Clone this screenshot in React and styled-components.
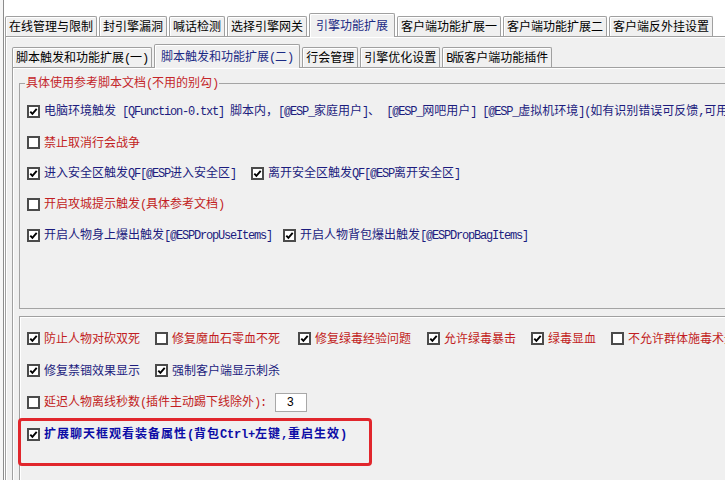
import React from "react";
import styled, { createGlobalStyle } from "styled-components";

const GlobalStyle = createGlobalStyle`
  html, body {
    margin: 0;
    padding: 0;
    background: #fff;
  }
  body {
    font-family: "Noto Sans CJK SC", "Liberation Sans", sans-serif;
    font-size: 12px;
  }
`;

const tones = {
  black: "#000",
  navy: "#1c1c7e",
  red: "#c21d22",
  blue: "#0c0ca6",
};

const Window = styled.div`
  display: flex;
  width: 725px;
  height: 480px;
  overflow: hidden;
  background: #fff;
`;

const Gutter = styled.div`
  flex: none;
  width: 3px;
  background: #f6f6f6;
  border-right: 1px solid #8c8c8c;
`;

const Main = styled.div`
  flex: none;
  width: 800px;
  padding: 13px 0 0 1px;
`;

const TabStrip = styled.div`
  position: relative;
  z-index: 1;
  display: flex;
  align-items: flex-end;
  gap: 2px;
  height: 23px;
`;

const Tab = styled.div`
  flex: none;
  box-sizing: border-box;
  height: ${(p) => (p.$active ? 24 : 20)}px;
  margin-bottom: ${(p) => (p.$active ? -1 : 0)}px;
  padding: 0 ${(p) => (p.$active ? 6 : 3)}px;
  border: 1px solid #a0a0a0;
  border-bottom: none;
  border-radius: 2px 2px 0 0;
  background: #f0f0f0;
  box-shadow: inset 1px 1px 0 #fff;
  color: ${(p) => (p.$active ? "#1b2a84" : "#000")};
  line-height: ${(p) => (p.$active ? 21 : 18)}px;
  white-space: nowrap;
`;

const Panel = styled.div`
  box-sizing: border-box;
  border-top: 1px solid #a0a0a0;
  border-left: 1px solid #a0a0a0;
  box-shadow: inset 1px 1px 0 #fff;
  background: #f0f0f0;
  padding: ${(p) => p.$pad};
  height: ${(p) => p.$h}px;
`;

const Group = styled.fieldset`
  box-sizing: border-box;
  margin: 0;
  padding: 0 0 0 7px;
  min-width: 0;
  height: 235px;
  border: 1px solid #a4a4a4;
`;

const Legend = styled.legend`
  margin-left: -2px;
  padding: 0 1px;
  line-height: 16px;
  color: #c4262a;
`;

const Rows = styled.div`
  display: flex;
  flex-direction: column;
  gap: ${(p) => p.$gap}px;
  padding-top: ${(p) => p.$top}px;
`;

const Row = styled.div`
  display: flex;
  align-items: center;
  height: ${(p) => p.$h || 16}px;
`;

const Asc = styled.span`
  font-family: "Liberation Mono", monospace;
  font-size: 12px;
  letter-spacing: -1.2px;
  white-space: pre;
`;

const CheckItem = styled.div`
  display: flex;
  align-items: center;
  flex: none;
  width: ${(p) => (p.$w ? `${p.$w}px` : "auto")};
  color: ${(p) => tones[p.$tone]};
  font-weight: ${(p) => (p.$bold ? 700 : 400)};
  letter-spacing: ${(p) => (p.$bold ? "1px" : "0")};
  white-space: nowrap;
  line-height: 16px;

  ${Asc} {
    letter-spacing: ${(p) => (p.$bold ? "-0.2px" : "-1.2px")};
  }
`;

const Box = styled.span`
  flex: none;
  display: flex;
  align-items: center;
  justify-content: center;
  box-sizing: border-box;
  width: 13px;
  height: 13px;
  margin-right: 4px;
  border: 2px solid #4b4b4b;
  background: #fff;
`;

const NumField = styled.input`
  box-sizing: border-box;
  width: 32px;
  height: 19px;
  margin-left: 9px;
  padding: 0 0 0 11px;
  border: 1px solid #a8a8a8;
  background: #fff;
  color: #000;
  font: 12px "Liberation Sans", sans-serif;
  outline: none;
`;

const Callout = styled.div`
  box-sizing: border-box;
  width: 354px;
  height: 48px;
  margin-left: -9px;
  padding: 5px 0 0 6px;
  border: 3px solid #e1262c;
  border-radius: 4px;
`;

function Txt({ children }) {
  return children
    .split(/([\x20-\x7e]+)/)
    .filter(Boolean)
    .map((s, i) => (/^[\x20-\x7e]+$/.test(s) ? <Asc key={i}>{s}</Asc> : s));
}

function Check({ on, label, tone = "navy", w, bold }) {
  return (
    <CheckItem $tone={tone} $w={w} $bold={bold}>
      <Box>
        {on && (
          <svg width="9" height="9" viewBox="0 0 9 9">
            <path d="M1.3 4.6 L3.4 6.9 L7.7 1.9" fill="none" stroke="#000" strokeWidth="1.9" />
          </svg>
        )}
      </Box>
      <span>
        <Txt>{label}</Txt>
      </span>
    </CheckItem>
  );
}

const topTabs = ["在线管理与限制", "封引擎漏洞", "喊话检测", "选择引擎网关", "引擎功能扩展", "客户端功能扩展一", "客户端功能扩展二", "客户端反外挂设置"];
const subTabs = ["脚本触发和功能扩展(一)", "脚本触发和功能扩展(二)", "行会管理", "引擎优化设置", "B版客户端功能插件"];

export default function App() {
  return (
    <Window>
      <GlobalStyle />
      <Gutter />
      <Main>
        <TabStrip>
          {topTabs.map((t, i) => (
            <Tab key={t} $active={i === 4}>
              {t}
            </Tab>
          ))}
        </TabStrip>
        <Panel $pad="7px 0 0 6px" $h={460}>
          <TabStrip>
            {subTabs.map((t, i) => (
              <Tab key={t} $active={i === 1}>
                <Txt>{t}</Txt>
              </Tab>
            ))}
          </TabStrip>
          <Panel $pad="6px 0 0 6px" $h={420}>
            <Group>
              <Legend>
                <Txt>具体使用参考脚本文档(不用的别勾)</Txt>
              </Legend>
              <Rows $gap={15} $top={11}>
                <Row>
                  <Check on label="电脑环境触发 [QFunction-0.txt] 脚本内，[@ESP_家庭用户]、 [@ESP_网吧用户] [@ESP_虚拟机环境](如有识别错误可反馈,可用于检测)" />
                </Row>
                <Row>
                  <Check tone="red" label="禁止取消行会战争" />
                </Row>
                <Row>
                  <Check on w={224} label="进入安全区触发QF[@ESP进入安全区]" />
                  <Check on label="离开安全区触发QF[@ESP离开安全区]" />
                </Row>
                <Row>
                  <Check tone="red" label="开启攻城提示触发(具体参考文档)" />
                </Row>
                <Row>
                  <Check on w={256} label="开启人物身上爆出触发[@ESPDropUseItems]" />
                  <Check on label="开启人物背包爆出触发[@ESPDropBagItems]" />
                </Row>
              </Rows>
            </Group>
            <Panel $pad="5px 0 0 7px" $h={200} style={{ marginTop: 7 }}>
              <Row $h={32}>
                <Check on tone="red" w={128} label="防止人物对砍双死" />
                <Check tone="red" w={143} label="修复魔血石零血不死" />
                <Check on tone="red" w={129} label="修复绿毒经验问题" />
                <Check on tone="red" w={104} label="允许绿毒暴击" />
                <Check on tone="red" w={80} label="绿毒显血" />
                <Check tone="red" label="不允许群体施毒术无效" />
              </Row>
              <Row $h={32}>
                <Check on w={128} label="修复禁锢效果显示" />
                <Check on label="强制客户端显示刺杀" />
              </Row>
              <Row $h={32}>
                <Check tone="red" label="延迟人物离线秒数(插件主动踢下线除外):" />
                <NumField readOnly value="3" />
              </Row>
              <Callout>
                <Row>
                  <Check on bold tone="blue" label="扩展聊天框观看装备属性(背包Ctrl+左键,重启生效)" />
                </Row>
              </Callout>
            </Panel>
          </Panel>
        </Panel>
      </Main>
    </Window>
  );
}
